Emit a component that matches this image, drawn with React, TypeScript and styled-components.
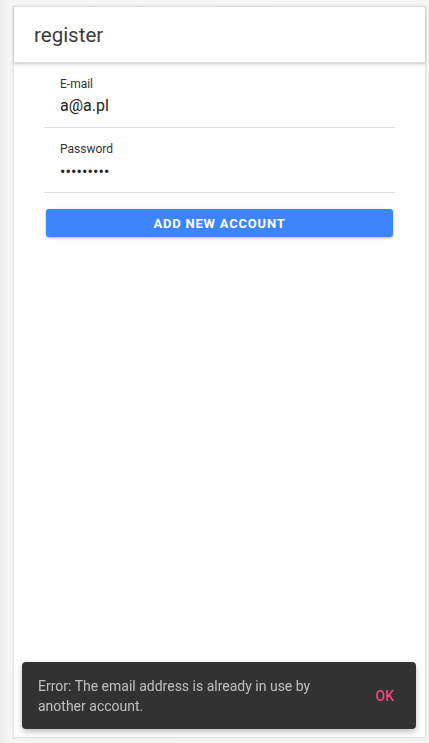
import React from "react";
import styled, { createGlobalStyle } from "styled-components";

const Global = createGlobalStyle`
  html, body { margin: 0; padding: 0; background: #f5f5f5; }
  body { font-family: Roboto, "Liberation Sans", Arial, sans-serif; }
  * { box-sizing: border-box; }
`;

const Page = styled.div`
  width: 429px;
  height: 743px;
  padding: 6px 3px 5px 13px;
  background: linear-gradient(to right, #ececec 0px, #f6f6f6 10px, #f5f5f5 100%);
  display: flex;
`;

const Card = styled.div`
  flex: 1;
  background: #fff;
  border: 1px solid #e4e4e4;
  box-shadow: 0 0 3px rgba(0, 0, 0, 0.08);
  display: flex;
  flex-direction: column;
`;

const Header = styled.header`
  height: 56px;
  display: flex;
  align-items: center;
  padding-left: 20px;
  font-size: 20.5px;
  font-weight: 400;
  color: #3d3d3d;
  box-shadow: 0 1px 3px rgba(0, 0, 0, 0.22);
  border-bottom: 1px solid #dcdcdc;
  position: relative;
  z-index: 1;
`;

const Form = styled.form`
  padding: 0 30px;
  display: flex;
  flex-direction: column;
`;

const Field = styled.label`
  display: flex;
  flex-direction: column;
  height: 65px;
  padding: 14px 16px 0;
  border-bottom: 1px solid #dedede;
`;

const Label = styled.span`
  font-size: 12px;
  color: #333;
  line-height: 14px;
`;

const Value = styled.span<{ $dots?: boolean }>`
  margin-top: ${(p) => (p.$dots ? "6px" : "5px")};
  font-size: 16px;
  letter-spacing: ${(p) => (p.$dots ? "0.1px" : "0")};
  color: #222;
  line-height: 20px;
`;

const Button = styled.button`
  margin: 16px 2px 0 2px;
  height: 28px;
  border: none;
  border-radius: 3px;
  background: #3d85fd;
  color: #fff;
  font-family: Roboto, "Liberation Sans", Arial, sans-serif;
  font-weight: 700;
  font-size: 13px;
  letter-spacing: 0.8px;
  text-transform: uppercase;
  box-shadow: 0 1px 3px rgba(0, 0, 0, 0.3);
`;

const Snackbar = styled.div`
  position: fixed;
  left: 22px;
  top: 662px;
  width: 394px;
  height: 67px;
  background: #323232;
  border-radius: 4px;
  box-shadow: 0 3px 6px rgba(0, 0, 0, 0.25);
  display: flex;
  align-items: center;
  justify-content: space-between;
  padding: 0 22px 0 16px;
`;

const Message = styled.span`
  font-size: 14px;
  line-height: 20px;
  color: #c0c0c0;
  max-width: 290px;
`;

const Action = styled.span`
  color: #ff4081;
  font-size: 14px;
  font-weight: 500;
`;

export default function App() {
  return (
    <>
      <Global />
      <Page>
        <Card>
          <Header>register</Header>
          <Form>
            <Field>
              <Label>E-mail</Label>
              <Value>a@a.pl</Value>
            </Field>
            <Field>
              <Label>Password</Label>
              <Value $dots>•••••••••</Value>
            </Field>
            <Button type="button">Add new account</Button>
          </Form>
        </Card>
      </Page>
      <Snackbar>
        <Message>Error: The email address is already in use by another account.</Message>
        <Action>OK</Action>
      </Snackbar>
    </>
  );
}
